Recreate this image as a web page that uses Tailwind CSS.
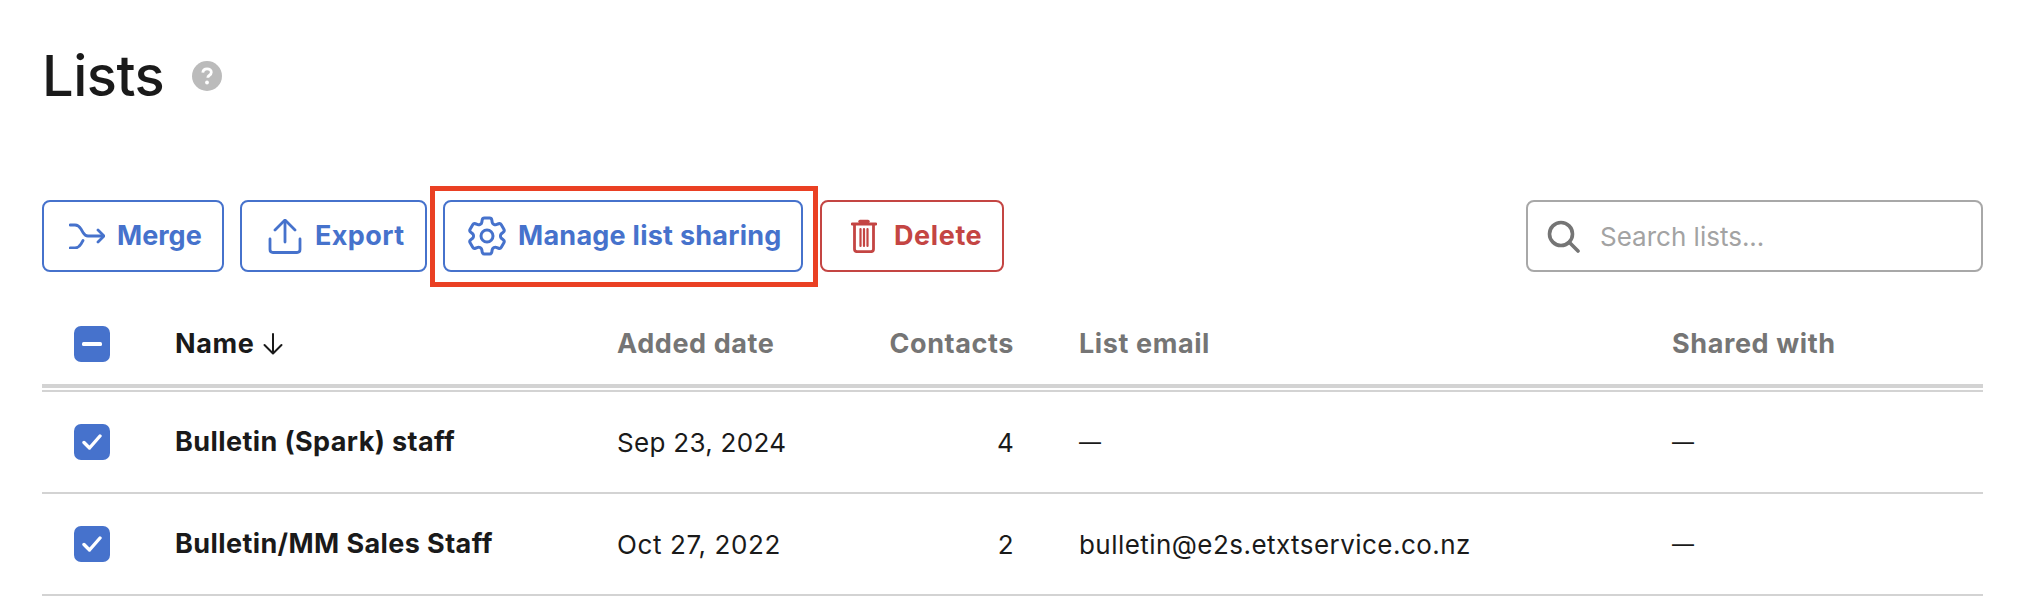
<!DOCTYPE html>
<html lang="en">
<head>
<meta charset="utf-8">
<title>Lists</title>
<script src="https://cdn.jsdelivr.net/npm/@tailwindcss/browser@4"></script>
</head>
<body class="bg-white">
<main class="w-[2020px] h-[596px] overflow-hidden pl-[42px] pr-[37px] font-['Inter',sans-serif] text-[#1a1a1a]">
  <div class="h-[200px] pt-[41px]">
    <div class="flex items-center h-[70px]">
      <h1 class="text-[56px] leading-[70px] font-medium tracking-[-0.5px]">Lists</h1>
      <svg class="ml-[28px] w-[30px] h-[30px]" viewBox="0 0 30 30"><circle cx="15" cy="15" r="15" fill="#bbbbbb"/><path d="M10.800 11.600c.2-2.400 2-3.800 4.300-3.800 2.500 0 4.200 1.500 4.200 3.500 0 1.600-1 2.500-2.100 3.200-1 .7-1.400 1.100-1.400 2.300" fill="none" stroke="#fff" stroke-width="2.800"/><circle cx="15" cy="21.500" r="1.900" fill="#fff"/></svg>
    </div>
  </div>

  <div class="flex items-start h-[72px]">
    <button class="flex items-center w-[182px] h-[72px] pl-[25px] gap-[12px] border-2 border-[#4672cc] rounded-[8px] text-[#4672cc] text-[27px] font-bold">
      <svg class="w-[36px] h-[26px] shrink-0" viewBox="0 0 36 26" fill="none" stroke="currentColor" stroke-width="2.800" stroke-linecap="round" stroke-linejoin="round"><path d="M1 2h5c3 0 4.500 1.500 6 4l2 3.500c1.200 2 2.500 3.500 5 3.500h15"/><path d="M1 25h5c3 0 4.500-1.500 6-4l2-3.500"/><path d="M29 7l6 6-6 6"/></svg>
      <span>Merge</span>
    </button>
    <button class="flex items-center w-[187px] h-[72px] ml-[16px] pl-[26px] gap-[13px] border-2 border-[#4672cc] rounded-[8px] text-[#4672cc] text-[27px] font-bold tracking-[0.4px]">
      <svg class="w-[34px] h-[35px] shrink-0" viewBox="0 0 34 35" fill="none" stroke="currentColor" stroke-width="2.800" stroke-linecap="round" stroke-linejoin="round"><path d="M17 23V2"/><path d="M7 11l10-10 10 10"/><path d="M2 20v10.500c0 2 1 3 3 3h24c2 0 3-1 3-3V20"/></svg>
      <span>Export</span>
    </button>
    <div class="ml-[3px] -mt-[14px] shrink-0 w-[388px] h-[101px] border-[5px] border-[#ea4023] pl-[8px] pt-[9px]">
      <button class="flex items-center w-[360px] h-[72px] pl-[18px] gap-[7px] border-2 border-[#4672cc] rounded-[8px] text-[#4672cc] text-[27px] font-bold tracking-[0.25px]">
        <svg class="w-[48px] h-[48px] shrink-0" viewBox="0 0 24 24" fill="none" stroke="currentColor" stroke-width="1.500" stroke-linecap="round" stroke-linejoin="round"><path d="M9.594 3.940c.09-.542.560-.940 1.110-.940h2.593c.55 0 1.020.398 1.110.940l.213 1.281c.063.374.313.686.645.870.074.040.147.083.220.127.324.196.720.257 1.075.124l1.217-.456a1.125 1.125 0 0 1 1.370.490l1.296 2.247a1.125 1.125 0 0 1-.260 1.431l-1.003.827c-.293.240-.438.613-.431.992a6.759 6.759 0 0 1 0 .255c-.007.378.138.750.430.990l1.005.828c.424.350.534.954.260 1.430l-1.298 2.247a1.125 1.125 0 0 1-1.369.491l-1.217-.456c-.355-.133-.750-.072-1.076.124a6.570 6.570 0 0 1-.220.128c-.331.183-.581.495-.644.869l-.213 1.280c-.09.543-.560.941-1.110.941h-2.594c-.55 0-1.020-.398-1.110-.940l-.213-1.281c-.062-.374-.312-.686-.644-.870a6.520 6.520 0 0 1-.220-.127c-.325-.196-.720-.257-1.076-.124l-1.217.456a1.125 1.125 0 0 1-1.369-.490l-1.297-2.247a1.125 1.125 0 0 1 .260-1.431l1.004-.827c.292-.240.437-.613.430-.992a6.932 6.932 0 0 1 0-.255c.007-.378-.138-.750-.430-.990l-1.004-.828a1.125 1.125 0 0 1-.260-1.430l1.297-2.247a1.125 1.125 0 0 1 1.370-.491l1.216.456c.356.133.751.072 1.076-.124.072-.044.146-.087.220-.128.332-.183.582-.495.644-.869l.214-1.281Z"/><path d="M15 12a3 3 0 1 1-6 0 3 3 0 0 1 6 0Z"/></svg>
        <span class="whitespace-nowrap">Manage list sharing</span>
      </button>
    </div>
    <button class="flex items-center w-[184px] h-[72px] ml-[2px] pl-[29px] gap-[17px] border-2 border-[#c44543] rounded-[8px] text-[#c44543] text-[27px] font-bold tracking-[0.6px]">
      <svg class="w-[26px] h-[34px] shrink-0" viewBox="0 0 26 34" fill="none" stroke="currentColor" stroke-linecap="round" stroke-width="2.800"><path d="M1 5h24"/><path d="M9 2.500h8" stroke-width="3.500"/><path d="M3.500 6v24c0 1.800 1 2.700 2.800 2.700h13.400c1.800 0 2.800-.9 2.800-2.700V6"/><path d="M9.500 10v17M13 10v17M16.500 10v17" stroke-width="2.200"/></svg>
      <span>Delete</span>
    </button>
    <div class="ml-auto flex items-center w-[457px] h-[72px] pl-[19px] gap-[20px] border-2 border-[#a8a8a8] rounded-[8px]">
      <svg class="w-[33px] h-[33px] shrink-0" viewBox="0 0 33 33" fill="none" stroke="#757575" stroke-width="3.600" stroke-linecap="round"><circle cx="14" cy="14" r="11.500"/><path d="M22.500 22.500l8.500 8.500"/></svg>
      <span class="text-[26px] text-[#a3a3a3]">Search lists...</span>
    </div>
  </div>

  <div class="grid grid-cols-[133px_442px_203px_194px_65px_593px_1fr] items-center h-[116px] pt-[32px] text-[27px] font-bold tracking-[0.6px] text-[#757575] border-b-4 border-[#d3d3d3]">
    <div class="pl-[32px]"><div class="flex items-center justify-center w-[36px] h-[36px] rounded-[7px] bg-[#4672cc]"><svg class="w-[20px] h-[6px]" viewBox="0 0 20 6"><rect y="1" width="20" height="4" rx="1.500" fill="#fff"/></svg></div></div>
    <div class="flex items-center gap-[9px] text-[#1a1a1a]"><span>Name</span><svg class="w-[20px] h-[22px]" viewBox="0 0 20 22" fill="none" stroke="#1a1a1a" stroke-width="2" stroke-linecap="round" stroke-linejoin="round"><path d="M10 1v19"/><path d="M1.500 12l8.500 8.500 8.500-8.500"/></svg></div>
    <div>Added date</div>
    <div class="text-right">Contacts</div>
    <div></div>
    <div>List email</div>
    <div>Shared with</div>
  </div>

  <div class="mt-[2px] border-t-2 border-[#d3d3d3]"></div>

  <div class="grid grid-cols-[133px_442px_203px_194px_65px_593px_1fr] items-center h-[102px] text-[26px] tracking-[0.3px] border-b-2 border-[#d3d3d3]">
    <div class="pl-[32px]"><div class="flex items-center justify-center w-[36px] h-[36px] rounded-[7px] bg-[#4672cc]"><svg class="w-[20px] h-[16px]" viewBox="0 0 20 16" fill="none" stroke="#fff" stroke-width="3.400" stroke-linecap="round" stroke-linejoin="round"><path d="M2 8.500l5.500 5.500L18 2"/></svg></div></div>
    <div class="text-[27px] font-bold tracking-[0.4px] whitespace-nowrap">Bulletin (Spark) staff</div>
    <div class="whitespace-nowrap">Sep 23, 2024</div>
    <div class="text-right">4</div>
    <div></div>
    <div class="text-[22px]">—</div>
    <div class="text-[22px]">—</div>
  </div>
  <div class="grid grid-cols-[133px_442px_203px_194px_65px_593px_1fr] items-center h-[102px] text-[26px] tracking-[0.3px] border-b-2 border-[#d3d3d3]">
    <div class="pl-[32px]"><div class="flex items-center justify-center w-[36px] h-[36px] rounded-[7px] bg-[#4672cc]"><svg class="w-[20px] h-[16px]" viewBox="0 0 20 16" fill="none" stroke="#fff" stroke-width="3.400" stroke-linecap="round" stroke-linejoin="round"><path d="M2 8.500l5.500 5.500L18 2"/></svg></div></div>
    <div class="text-[27px] font-bold tracking-[0.4px] whitespace-nowrap">Bulletin/MM Sales Staff</div>
    <div class="whitespace-nowrap tracking-[0.6px]">Oct 27, 2022</div>
    <div class="text-right">2</div>
    <div></div>
    <div class="whitespace-nowrap tracking-[0.45px]">bulletin@e2s.etxtservice.co.nz</div>
    <div class="text-[22px]">—</div>
  </div>
</main>
</body>
</html>
